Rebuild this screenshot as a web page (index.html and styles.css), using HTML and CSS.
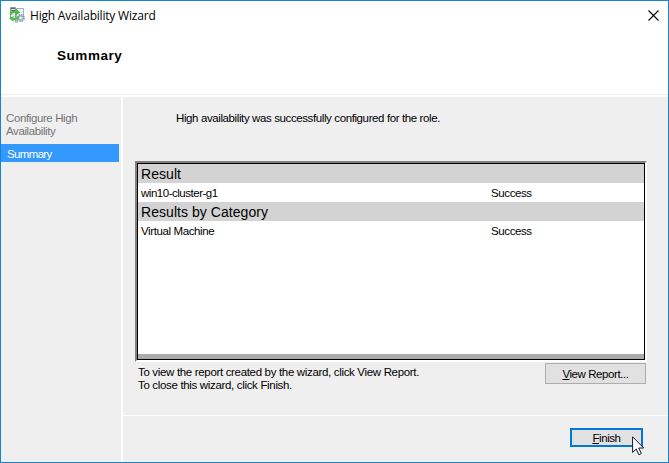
FILE: index.html
```html
<!DOCTYPE html>
<html lang="en">
<head>
<meta charset="utf-8">
<title>High Availability Wizard</title>
<link rel="stylesheet" href="styles.css">
</head>
<body>
<div class="window">
  <header class="header">
    <div class="titlebar">
      <svg class="app-icon" width="16" height="16" viewBox="0 0 16 16">
        <path d="M1.500.5h5v11h-5z" fill="#e3e8eb" stroke="#8d989e"/>
        <path d="M2 1.500h4M2 3.500h4" stroke="#56646c"/>
        <path d="M7.500 1.500h7v9h-7z" fill="#f0f4f8" stroke="#a3afb9"/>
        <circle cx="11.800" cy="11" r="3.200" fill="#dce5ef" stroke="#879bb2" stroke-width="1.700" stroke-dasharray="1.500 1"/>
        <circle cx="11.800" cy="11" r="2.300" fill="#c4d2e1" stroke="#8298b0" stroke-width=".8"/>
        <circle cx="11.800" cy="11" r="1" fill="#fff"/>
        <circle cx="7.500" cy="14.200" r="1.300" fill="#c4d2e1" stroke="#8298b0" stroke-width=".8"/>
        <path d="M1.500 7.500C2.500 5 4.500 4.500 7 5" fill="none" stroke="#3fbf36" stroke-width="2"/>
        <path d="M7 2l4.500 3.500L6.500 8z" fill="#3fbf36"/>
        <path d="M9.500 9.500C8.500 12 6.500 12.500 4 12" fill="none" stroke="#48c73d" stroke-width="2"/>
        <path d="M4.500 9v5.500L0 11.500z" fill="#48c73d"/>
      </svg>
      <span class="title">High Availability Wizard</span>
      <svg class="close" width="11" height="11" viewBox="0 0 11 11"><path d="M.5.5l10 10M10.500.5l-10 10" stroke="#000" stroke-width="1.100"/></svg>
    </div>
    <h1 class="heading">Summary</h1>
  </header>
  <div class="body">
    <nav class="sidebar">
      <div class="step">Configure High<br>Availability</div>
      <div class="step current">Summary</div>
    </nav>
    <main class="main">
      <section class="page">
        <p class="intro">High availability was successfully configured for the role.</p>
        <div class="frame">
          <div class="report">
            <div class="group">Result</div>
            <div class="row"><span class="name cluster">win10-cluster-g1</span><span class="status">Success</span></div>
            <div class="group">Results by Category</div>
            <div class="row"><span class="name">Virtual Machine</span><span class="status">Success</span></div>
            <div class="scroll"></div>
          </div>
        </div>
        <div class="below">
          <p class="hint">To view the report created by the wizard, click View Report.<br>To close this wizard, click Finish.</p>
          <button class="button view"><span><u>V</u>iew Report...</span></button>
        </div>
      </section>
      <footer class="footer">
        <button class="button finish"><span><u>F</u>inish</span></button>
        <svg class="cursor" width="13" height="20" viewBox="0 0 13 20"><path d="M.6.8v15.600l3.600-3.400 2.600 5.700 2.500-1.100-2.600-5.600h5z" fill="#fff" stroke="#111827" stroke-width="1"/></svg>
      </footer>
    </main>
  </div>
</div>
</body>
</html>
```
FILE: styles.css
```css
* { box-sizing: border-box; }
body { margin: 0; font: 11.5px/13px "Liberation Sans", Arial, sans-serif; letter-spacing: -0.39px; color: #000; }
p, h1 { margin: 0; }
.window { width: 669px; height: 463px; border: 1px solid #1883d0; background: #fff; display: flex; flex-direction: column; overflow: hidden; }
.header { height: 94px; flex: none; border-bottom: 1px solid #ededed; }
.titlebar { height: 28px; display: flex; align-items: center; padding: 0 9px 0 8px; }
.app-icon { flex: none; }
.title { font: 12px/16px "Open Sans", sans-serif; margin: 2px 0 0 5px; letter-spacing: -0.2px; white-space: nowrap; }
.close { margin-left: auto; }
.heading { font: bold 13.5px/16px "Liberation Sans", Arial, sans-serif; letter-spacing: 0.55px; margin: 19px 0 0 56px; }
.body { flex: 1; min-height: 0; margin-top: 2px; display: flex; gap: 2px; }
.sidebar { width: 120px; background: #efefef; padding-top: 15px; }
.step { padding-left: 5px; color: #747474; }
.current { width: 118px; height: 18px; margin-top: 6px; padding-left: 6px; line-height: 20px; letter-spacing: -0.65px; background: #3399ff; color: #fff; }
.main { flex: 1; display: flex; flex-direction: column; }
.page { height: 318px; background: #efefef; padding: 15px 21px 0 12px; }
.intro { padding-left: 41px; white-space: nowrap; }
.frame { height: 201px; width: 512px; margin-top: 36px; border: 2px solid; border-color: #808080 #fff #fff #808080; }
.report { height: 197px; border: 1px solid #000; background: #fff; display: flex; flex-direction: column; }
.group { height: 19px; flex: none; background: #d3d3d3; font-size: 14px; line-height: 20px; letter-spacing: 0.05px; padding-left: 3px; }
.row { height: 19px; flex: none; display: flex; line-height: 21px; padding-left: 3px; }
.name { width: 350px; }
.cluster { letter-spacing: -0.48px; }
.scroll { height: 5px; margin-top: auto; background: #ababab; }
.below { display: flex; justify-content: space-between; padding-left: 3px; margin-top: 1px; width: 511px; }
.hint { padding-top: 3px; white-space: nowrap; letter-spacing: -0.33px; }
.button { border: 1px solid #adadad; background: #e1e1e1; font: inherit; letter-spacing: -0.42px; color: #000; padding: 1px 0 0; display: flex; align-items: center; justify-content: center; }
.button u { text-underline-offset: 1px; text-decoration-thickness: 1px; }
.view { width: 101px; height: 21px; }
.footer { flex: 1; margin-top: 1px; background: #efefef; display: flex; justify-content: flex-end; padding: 12px 25px 0 0; position: relative; }
.finish { width: 73px; height: 19px; border: 2px solid #0078d7; }
.cursor { position: absolute; left: 509px; top: 20px; }
```
